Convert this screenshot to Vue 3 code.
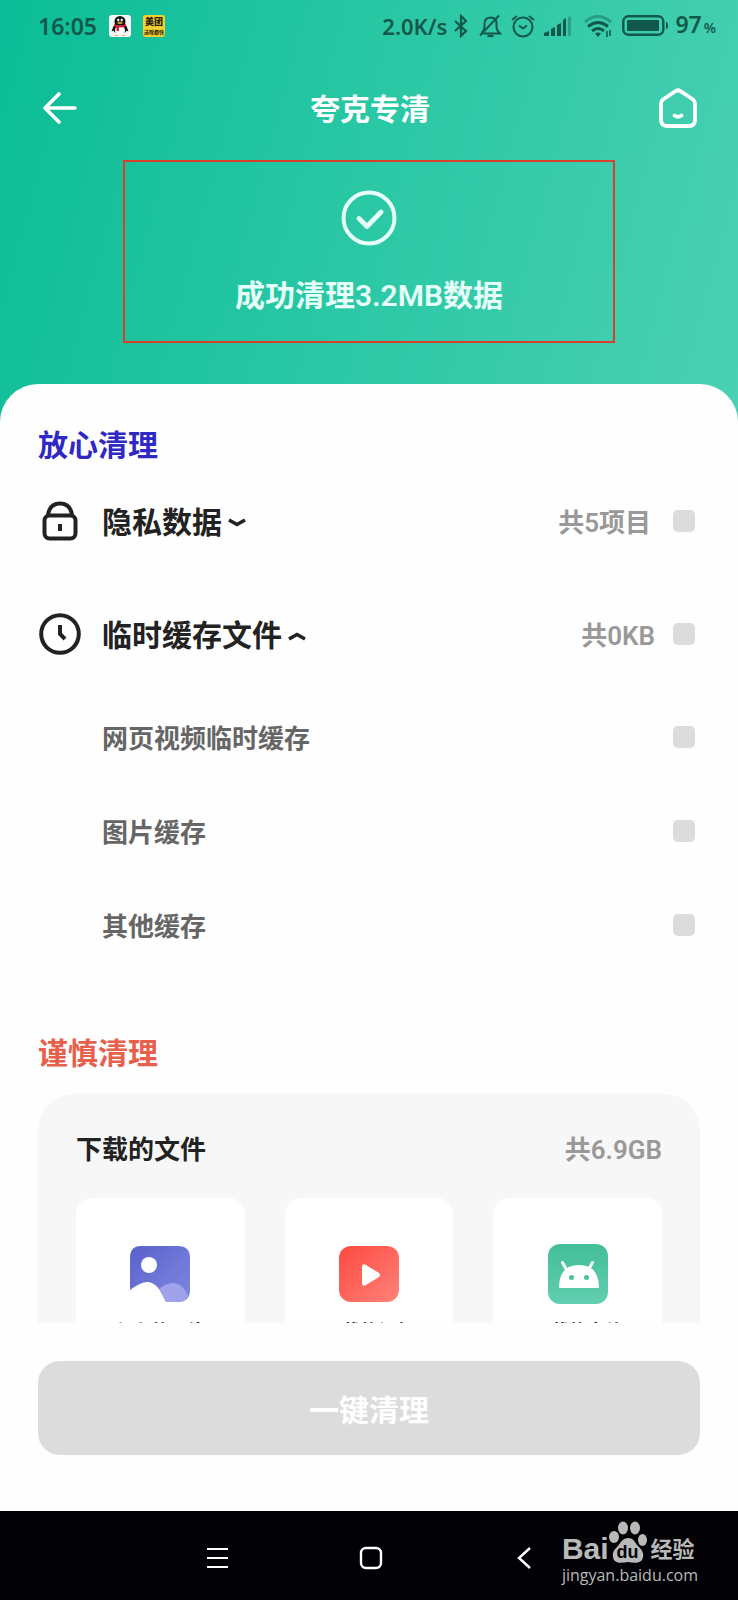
<script setup>
import { ref } from 'vue';

const privacyOpen = ref(false);
const cacheOpen = ref(true);
const privacyChecked = ref(false);
const cacheChecked = ref(false);

const cacheItems = ref([
  { id: 'video', name: '网页视频临时缓存', checked: false },
  { id: 'image', name: '图片缓存', checked: false },
  { id: 'other', name: '其他缓存', checked: false }
]);

const downloads = [
  { id: 'photo', name: '保存的图片' },
  { id: 'video', name: '下载的视频' },
  { id: 'apk', name: '下载的文件' }
];
</script>

<template>
  <div class="page">
    <header class="hero">
      <div class="status-bar">
        <div class="status-left">
          <span class="time">16:05</span>
          <svg class="app-icon" viewBox="0 0 22 22">
            <rect width="22" height="22" rx="3" fill="#f4f8f8" />
            <ellipse cx="11" cy="13.500" rx="7" ry="5.500" fill="#111" />
            <path d="M4.500 11 2.500 16.500 5 15.500zM17.500 11l2 5.500L17 15.500z" fill="#111" />
            <ellipse cx="11" cy="6.500" rx="5.500" ry="5.500" fill="#111" />
            <ellipse cx="11" cy="15.500" rx="5" ry="5" fill="#fff" />
            <ellipse cx="9.300" cy="5" rx="1.100" ry="1.500" fill="#fff" />
            <ellipse cx="12.700" cy="5" rx="1.100" ry="1.500" fill="#fff" />
            <ellipse cx="11" cy="8" rx="2.800" ry=".9" fill="#e8a33a" />
            <path d="M5 9q6 3 12 0v2q-4 2-7 1.500V16H7.500v-3.500q-2-.5-2.500-1.500" fill="#d8232f" />
            <path d="M5 21q2-2 5 0zM12 21q3-2 5 0z" fill="#e8a33a" />
          </svg>
          <span class="meituan"><b>美团</b><i>送啥都快</i></span>
        </div>
        <div class="status-right">
          <span class="speed">2.0K/s</span>
          <svg class="s-bt" viewBox="0 0 16 24" fill="none" stroke="#12584a" stroke-width="2.200">
            <path d="M2 7l11 10-5 5V2l5 5L2 17" />
          </svg>
          <svg class="s-bell" viewBox="0 0 24 24" fill="none" stroke="#12584a" stroke-width="2">
            <path d="M5.500 19.500H22q-3.500-3-3.500-7V9q0-5-5.500-5.500Q7 3.500 6.500 9v4q0 3-3 6M21 1.500L2 21.500" />
            <path d="M9.500 22h6" stroke-width="2.200" />
          </svg>
          <svg class="s-alarm" viewBox="0 0 24 24" fill="none" stroke="#12584a" stroke-width="2">
            <circle cx="12" cy="13" r="9.500" />
            <path d="M8 11.500l4 3 4-3M1 6l5-4M23 6l-5-4" />
          </svg>
          <svg class="s-signal" viewBox="0 0 28 22" fill="#12584a">
            <path d="M0 18l5-2v5H0zM7 14l4-2v9H7zM13 10l4-2v13h-4zM19 5l3-2v18h-3z" />
            <path d="M24 2l3-1v20h-3z" opacity=".35" />
          </svg>
          <svg class="s-wifi" viewBox="0 0 28 24" fill="none" stroke="#12584a" stroke-width="3">
            <path d="M1 8q13-11 26 0" opacity=".4" />
            <path d="M4 12.500q10-8 20 0M8 17q6-5 12 0" />
            <path d="M11 19.500q3-2 6 0l-3 3.500z" fill="#12584a" stroke="none" />
            <path d="M23 17v6M26 16v6" stroke-width="1.500" />
          </svg>
          <svg class="s-battery" viewBox="0 0 47 22">
            <rect x="1.300" y="1.300" width="40" height="18.400" rx="5" fill="none" stroke="#12584a" stroke-width="2.400" />
            <rect x="5" y="5" width="32" height="11" rx="1" fill="#12584a" />
            <path d="M44 7q2 0 2 3.500T44 14z" fill="#12584a" />
          </svg>
          <span class="percent">97<small>%</small></span>
        </div>
      </div>

      <nav class="title-bar">
        <button class="icon-btn" aria-label="返回">
          <svg width="36" height="32" viewBox="0 0 36 32" fill="none" stroke="#fff" stroke-width="3.600" stroke-linecap="round" stroke-linejoin="round">
            <path d="M17 2L3 16l14 14M3 16h30" />
          </svg>
        </button>
        <h1>夸克专清</h1>
        <button class="icon-btn" aria-label="主页">
          <svg width="40" height="40" viewBox="0 0 40 40" fill="none" stroke="#fff" stroke-width="3.800" stroke-linecap="round" stroke-linejoin="round">
            <path d="M17.500 3.200q2.500-1.800 5 0L35 11.500q2 1.500 2 4V32q0 6-6 6H9q-6 0-6-6V15.500q0-2.500 2-4z" />
            <path d="M16.500 27.500q3.500 2.500 7 0" />
          </svg>
        </button>
      </nav>

      <section class="result">
        <svg width="56" height="56" viewBox="0 0 56 56" fill="none" stroke="#e6fff9" stroke-linecap="round" stroke-linejoin="round">
          <circle cx="28" cy="28" r="25.500" stroke-width="4" />
          <path d="M18 28.500l8 8L40 22" stroke-width="4.800" />
        </svg>
        <p>成功清理3.2MB数据</p>
      </section>
    </header>

    <main class="sheet">
      <div class="scroll">
        <h2 class="safe">放心清理</h2>

        <div class="row">
          <svg class="row-icon" viewBox="0 0 44 44" fill="none" stroke="#222" stroke-width="4">
            <rect x="6.500" y="16.500" width="31" height="23" rx="5" />
            <path d="M10 17q1-12.500 12-12.500T34 17" />
            <path d="M22 25v7" />
          </svg>
          <button class="row-toggle" @click="privacyOpen = !privacyOpen">
            隐私数据
            <svg :class="{ flip: privacyOpen }" width="18" height="10" viewBox="0 0 18 10" fill="none" stroke="#222" stroke-width="3.600">
              <path d="M1 2l8 4.500L17 2" />
            </svg>
          </button>
          <label class="count" for="privacy">共5项目</label>
          <input id="privacy" v-model="privacyChecked" type="checkbox">
        </div>

        <div class="row">
          <svg class="row-icon" viewBox="0 0 44 44" fill="none" stroke="#222" stroke-width="4">
            <circle cx="22" cy="22" r="18.800" />
            <path d="M22 13v9l5 5" />
          </svg>
          <button class="row-toggle" @click="cacheOpen = !cacheOpen">
            临时缓存文件
            <svg :class="{ flip: cacheOpen }" width="18" height="10" viewBox="0 0 18 10" fill="none" stroke="#222" stroke-width="3.600">
              <path d="M1 2l8 4.500L17 2" />
            </svg>
          </button>
          <label class="count wide" for="cache">共0KB</label>
          <input id="cache" v-model="cacheChecked" type="checkbox">
        </div>

        <ul v-if="cacheOpen" class="sub-list">
          <li v-for="item in cacheItems" :key="item.id">
            <label :for="`cache-${item.id}`">{{ item.name }}</label>
            <input :id="`cache-${item.id}`" v-model="item.checked" type="checkbox">
          </li>
        </ul>

        <h2 class="careful">谨慎清理</h2>

        <section class="downloads">
          <div class="downloads-head">
            <h3>下载的文件</h3>
            <span>共6.9GB</span>
          </div>
          <div class="cards">
            <button v-for="file in downloads" :key="file.id" class="card">
              <svg v-if="file.id === 'photo'" width="62" height="62" viewBox="0 0 62 62">
                <defs>
                  <linearGradient id="g-photo" x1="0" y1="0" x2="1" y2="1">
                    <stop offset="0" stop-color="#5961cc" />
                    <stop offset="1" stop-color="#8088e0" />
                  </linearGradient>
                </defs>
                <path d="M1 15Q1 3 12 3h37q12 0 12 12v32q0 12-12 12H37Q29 39 18 39q-6 0-17 8z" fill="url(#g-photo)" />
                <path d="M30 46q7-6 14-6 10 0 15 13-3 6-11 6H37z" fill="#a0a3ea" />
                <circle cx="20" cy="22" r="8" fill="#fff" />
              </svg>
              <svg v-else-if="file.id === 'video'" width="62" height="62" viewBox="0 0 62 62">
                <defs>
                  <linearGradient id="g-video" x1="0" y1="0" x2="1" y2="1">
                    <stop offset="0" stop-color="#fd4941" />
                    <stop offset="1" stop-color="#ff8278" />
                  </linearGradient>
                </defs>
                <rect x="1" y="3" width="60" height="56" rx="12" fill="url(#g-video)" />
                <path d="M24 24v16q0 4 4 2l13-8q2-2 0-4l-13-8q-4-2-4 2" fill="#fff" />
              </svg>
              <svg v-else width="62" height="62" viewBox="0 0 62 62">
                <defs>
                  <linearGradient id="g-apk" x1="0" y1="0" x2="0" y2="1">
                    <stop offset="0" stop-color="#42be98" />
                    <stop offset="1" stop-color="#62cfb0" />
                  </linearGradient>
                </defs>
                <rect x="1" y="1" width="60" height="60" rx="12" fill="url(#g-apk)" />
                <path d="M12 45q0-23 20-23t20 23z" fill="#fff" />
                <path d="M15.500 19.500l5 9M45.500 19.500l-5 9" stroke="#fff" stroke-width="3" stroke-linecap="round" />
                <circle cx="24.500" cy="34.500" r="2.500" fill="#49bf9b" />
                <circle cx="39.500" cy="34.500" r="2.500" fill="#49bf9b" />
              </svg>
              <span>{{ file.name }}</span>
            </button>
          </div>
        </section>
      </div>

      <div class="action">
        <button class="clean-btn">一键清理</button>
      </div>
    </main>

    <footer class="sys-nav">
      <button aria-label="最近任务">
        <svg width="24" height="24" viewBox="0 0 24 24" stroke="#fff" stroke-width="2.200">
          <path d="M2 3h21M2 12h21M2 21h21" />
        </svg>
      </button>
      <button aria-label="桌面">
        <svg width="24" height="24" viewBox="0 0 24 24" fill="none" stroke="#fff" stroke-width="2.400">
          <rect x="2" y="2" width="20" height="20" rx="5" />
        </svg>
      </button>
      <button aria-label="后退">
        <svg width="24" height="24" viewBox="0 0 24 24" fill="none" stroke="#fff" stroke-width="2.400">
          <path d="M17 2L6 12l11 10" />
        </svg>
      </button>
      <div class="watermark">
        <div class="brand">
          <span class="bai">Bai</span>
          <span class="paw">
            <svg width="38" height="42" viewBox="0 0 38 42" fill="#b9b9b9">
              <ellipse cx="5" cy="16" rx="5" ry="6" />
              <ellipse cx="14" cy="7" rx="5" ry="6.500" />
              <ellipse cx="26" cy="7" rx="5" ry="6.500" />
              <ellipse cx="33.500" cy="19" rx="4.500" ry="6" />
              <path d="M19 17c6 0 7 5 10 8 4 4 6 7 5 11-1 7-8 6-15 5-7 1-14 2-15-5-1-5 2-8 5-11 3-4 5-8 10-8" />
            </svg>
            <b>du</b>
          </span>
          <span class="jy">经验</span>
        </div>
        <span class="url">jingyan.baidu.com</span>
      </div>
    </footer>
  </div>
</template>

<style>
body {
  margin: 0;
  background: #fff;
}
</style>

<style scoped>
.page {
  display: flex;
  flex-direction: column;
  min-height: 100vh;
  font-family: Roboto, "Noto Sans CJK SC", sans-serif;
  font-weight: 600;
  color: #222;
  background: linear-gradient(105deg, #0abd96 0, #2bc8a5 50%, #4bd0b3 100%) top / 100% 440px no-repeat;
}

.page * {
  box-sizing: border-box;
}

h1, h2, h3, p, ul {
  margin: 0;
  padding: 0;
  font-weight: 600;
}

svg {
  display: block;
  flex: none;
}

button {
  border: 0;
  padding: 0;
  background: none;
  font: inherit;
  color: inherit;
  cursor: pointer;
}

.status-bar {
  display: flex;
  justify-content: space-between;
  align-items: center;
  height: 52px;
  padding: 0 22px 0 38px;
  color: #12584a;
  font-family: "Noto Sans", "Open Sans", sans-serif;
  font-size: 23px;
  line-height: 32px;
}

.status-left,
.status-right {
  display: flex;
  align-items: center;
}

.status-left {
  gap: 12px;
}

.app-icon {
  width: 22px;
  height: 22px;
}

.meituan {
  display: flex;
  flex-direction: column;
  align-items: center;
  width: 22px;
  height: 22px;
  overflow: hidden;
  border-radius: 3px;
  background: #f6d02f;
  color: #2a2410;
  font-family: "Noto Sans CJK SC", sans-serif;
}

.meituan b {
  font-size: 9px;
  line-height: 14px;
}

.meituan i {
  font-size: 5px;
  line-height: 6px;
  font-style: normal;
}

.speed {
  font-size: 22px;
}

.s-bt {
  width: 16px;
  height: 24px;
  margin-left: 6px;
}

.s-bell,
.s-alarm {
  width: 24px;
  height: 24px;
  margin-left: 9px;
}

.s-signal {
  width: 28px;
  height: 22px;
  margin-left: 9px;
}

.s-wifi {
  width: 28px;
  height: 24px;
  margin-left: 12px;
}

.s-battery {
  width: 47px;
  height: 22px;
  margin: 0 6px 0 10px;
}

.percent small {
  margin-left: 2px;
  font-size: 14px;
}

.title-bar {
  display: flex;
  align-items: center;
  justify-content: space-between;
  height: 108px;
  padding: 4px 40px 0 42px;
  color: #fff;
}

.title-bar h1 {
  padding-top: 4px;
  font-size: 30px;
  line-height: 40px;
}

.icon-btn {
  display: flex;
  width: 40px;
}

.result {
  display: flex;
  flex-direction: column;
  align-items: center;
  gap: 30px;
  width: 66.600%;
  height: 183px;
  margin: 0 auto 41px;
  padding-top: 28px;
  border: 2px solid #d9402c;
  color: #e6fff9;
}

.result p {
  font-size: 30px;
  line-height: 40px;
}

.sheet {
  flex: 1;
  display: flex;
  flex-direction: column;
  border-radius: 38px 38px 0 0;
  background: #fefefe;
}

.scroll {
  height: 939px;
  padding: 42px 38px 0;
  overflow: hidden;
}

h2 {
  font-size: 30px;
  line-height: 40px;
}

.safe {
  margin-bottom: 32px;
  color: #3028c4;
}

.careful {
  margin-bottom: 20px;
  color: #e8604c;
}

.row {
  display: flex;
  align-items: center;
  height: 46px;
  margin-bottom: 67px;
  padding-right: 5px;
}

.row-icon {
  width: 44px;
  height: 44px;
  margin-right: 20px;
}

.row-toggle {
  display: flex;
  align-items: center;
  gap: 6px;
  margin-right: auto;
  padding-top: 4px;
  font-size: 30px;
  line-height: 40px;
}

.flip {
  transform: rotate(180deg);
}

.count {
  margin-right: 22px;
  padding-top: 4px;
  color: #999;
  font-size: 26px;
  line-height: 36px;
}

.count.wide {
  margin-right: 18px;
}

input[type="checkbox"] {
  appearance: none;
  flex: none;
  width: 22px;
  height: 22px;
  margin: 0;
  border-radius: 5px;
  background: #dcdcdc;
}

input[type="checkbox"]:checked {
  background: #2bc8a5;
}

.sub-list {
  margin-bottom: 62px;
  list-style: none;
}

.sub-list li {
  display: flex;
  align-items: center;
  justify-content: space-between;
  height: 94px;
  padding: 0 5px 0 64px;
  color: #666;
  font-size: 26px;
  line-height: 36px;
}

.sub-list label {
  padding-top: 4px;
}

.row + .sub-list {
  margin-top: -34px;
}

.downloads {
  padding: 36px 38px;
  border-radius: 36px;
  background: #f7f7f7;
}

.downloads-head {
  display: flex;
  justify-content: space-between;
  font-size: 26px;
  line-height: 40px;
}

.downloads-head h3 {
  font-size: 26px;
}

.downloads-head span {
  color: #999;
}

.cards {
  display: grid;
  grid-template-columns: repeat(3, 1fr);
  gap: 40px;
  margin-top: 28px;
}

.card {
  display: flex;
  flex-direction: column;
  align-items: center;
  gap: 14px;
  height: 190px;
  padding-top: 45px;
  border-radius: 16px;
  background: #fff;
  font-size: 18px;
  line-height: 26px;
}

.action {
  padding: 38px 38px 56px;
}

.clean-btn {
  display: block;
  width: 100%;
  height: 94px;
  border-radius: 22px;
  background: #dcdcdc;
  color: #fff;
  font-size: 30px;
}

.sys-nav {
  position: relative;
  display: grid;
  grid-template-columns: repeat(3, 154px);
  justify-content: center;
  align-items: center;
  justify-items: center;
  height: 89px;
  padding: 4px 0 0 4px;
  background: #020206;
}

.watermark {
  position: absolute;
  right: 40px;
  top: 10px;
  color: #b9b9b9;
}

.brand {
  display: flex;
  align-items: flex-end;
  height: 42px;
}

.bai {
  font-family: "Liberation Sans", sans-serif;
  font-weight: 700;
  font-size: 30px;
  line-height: 28px;
}

.paw {
  position: relative;
}

.paw b {
  position: absolute;
  left: 0;
  right: 0;
  bottom: 1px;
  text-align: center;
  color: #020206;
  font-family: "Liberation Sans", sans-serif;
  font-size: 18px;
  line-height: 20px;
}

.jy {
  margin-left: 4px;
  font-size: 22px;
  line-height: 26px;
}

.url {
  display: block;
  font-family: "Open Sans", sans-serif;
  font-weight: 400;
  font-size: 16px;
  line-height: 24px;
}
</style>
